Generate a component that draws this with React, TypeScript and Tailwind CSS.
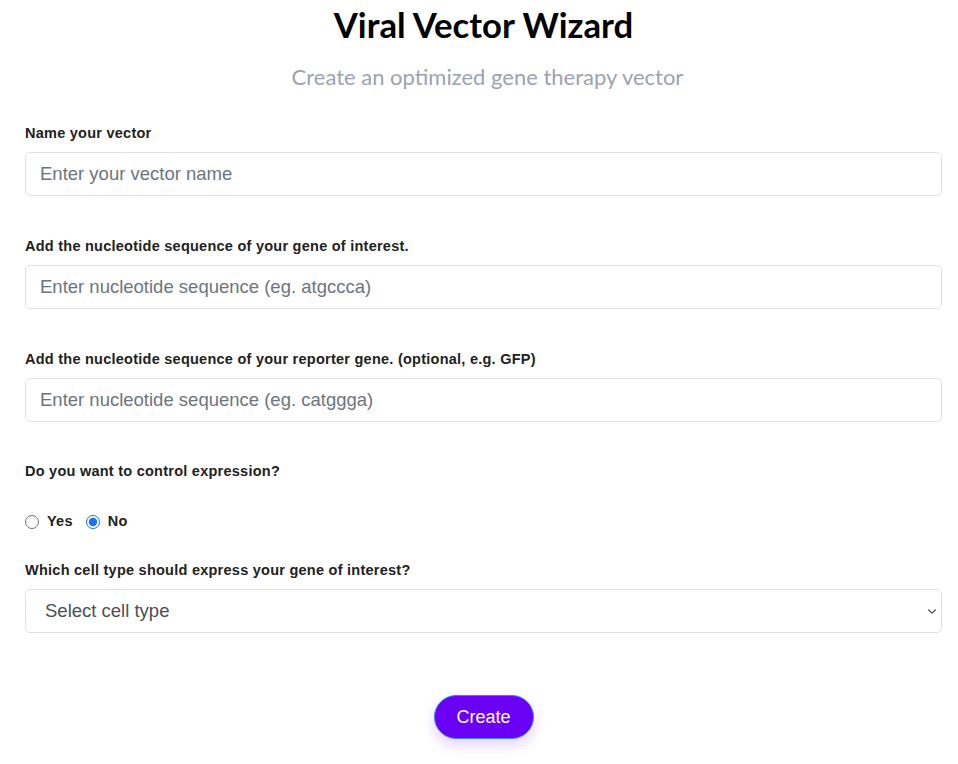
import { useState } from "react";

const label =
  "block text-[14.5px] leading-[18px] tracking-[0.25px] font-bold text-[#222] [font-family:'Liberation_Sans',Arial,sans-serif]";
const field =
  "block w-full h-11 rounded-[5px] border border-[#dee2e6] bg-white px-[14px] text-[18.5px] text-[#212529] placeholder:text-[#6c757d] outline-none [font-family:'Liberation_Sans',Arial,sans-serif]";

export default function App() {
  const [control, setControl] = useState("no");

  return (
    <main className="min-h-screen bg-white pl-[25px] pr-[16px]">
      <h1 className="pt-[3px] text-center text-[34.7px] font-bold leading-[44px] text-black [font-family:Lato,sans-serif]">
        Viral Vector Wizard
      </h1>
      <p className="mt-[16px] pl-[8px] text-center text-[22px] leading-[28px] text-[#9ca3af] [font-family:Lato,sans-serif]">
        Create an optimized gene therapy vector
      </p>

      <form className="mt-[33px]" onSubmit={(e) => e.preventDefault()}>
        <label className={label}>Name your vector</label>
        <input className={`${field} mt-[10px]`} placeholder="Enter your vector name" />

        <label className={`${label} mt-[41px]`}>
          Add the nucleotide sequence of your gene of interest.
        </label>
        <input className={`${field} mt-[10px]`} placeholder="Enter nucleotide sequence (eg. atgccca)" />

        <label className={`${label} mt-[41px]`}>
          Add the nucleotide sequence of your reporter gene. (optional, e.g. GFP)
        </label>
        <input className={`${field} mt-[10px]`} placeholder="Enter nucleotide sequence (eg. catggga)" />

        <label className={`${label} mt-[40px]`}>Do you want to control expression?</label>

        <div className="mt-[33px] flex h-[18px] items-center gap-[13px] text-[14.5px] tracking-[0.25px] font-bold text-[#222] [font-family:'Liberation_Sans',Arial,sans-serif]">
          <label className="flex items-center gap-[8px]">
            <input
              type="radio"
              name="control"
              checked={control === "yes"}
              onChange={() => setControl("yes")}
              className="m-0 h-[14px] w-[14px] accent-[#1a73e8]"
            />
            Yes
          </label>
          <label className="flex items-center gap-[8px]">
            <input
              type="radio"
              name="control"
              checked={control === "no"}
              onChange={() => setControl("no")}
              className="m-0 h-[14px] w-[14px] accent-[#1a73e8]"
            />
            No
          </label>
        </div>

        <label className={`${label} mt-[30px]`}>Which cell type should express your gene of interest?</label>
        <div className="relative mt-[10px]">
          <select defaultValue="" className={`${field} appearance-none pl-[19px] text-[#495057]`}>
            <option value="" disabled>
              Select cell type
            </option>
            <option>Neurons</option>
            <option>Hepatocytes</option>
            <option>Cardiomyocytes</option>
          </select>
          <svg
            className="pointer-events-none absolute right-[4px] top-1/2 -translate-y-1/2"
            width="12"
            height="12"
            viewBox="0 0 16 16"
            fill="none"
            stroke="#555"
            strokeWidth="1.6"
          >
            <path d="M3 6l5 5 5-5" />
          </svg>
        </div>

        <div className="mt-[62px] flex justify-center">
          <button
            type="submit"
            className="h-11 w-[100px] rounded-full border border-[#3b82f6] bg-[#6a00f4] text-[18px] text-white shadow-[0_6px_14px_rgba(106,0,244,0.18)] [font-family:'Liberation_Sans',Arial,sans-serif]"
          >
            Create
          </button>
        </div>
      </form>
    </main>
  );
}
